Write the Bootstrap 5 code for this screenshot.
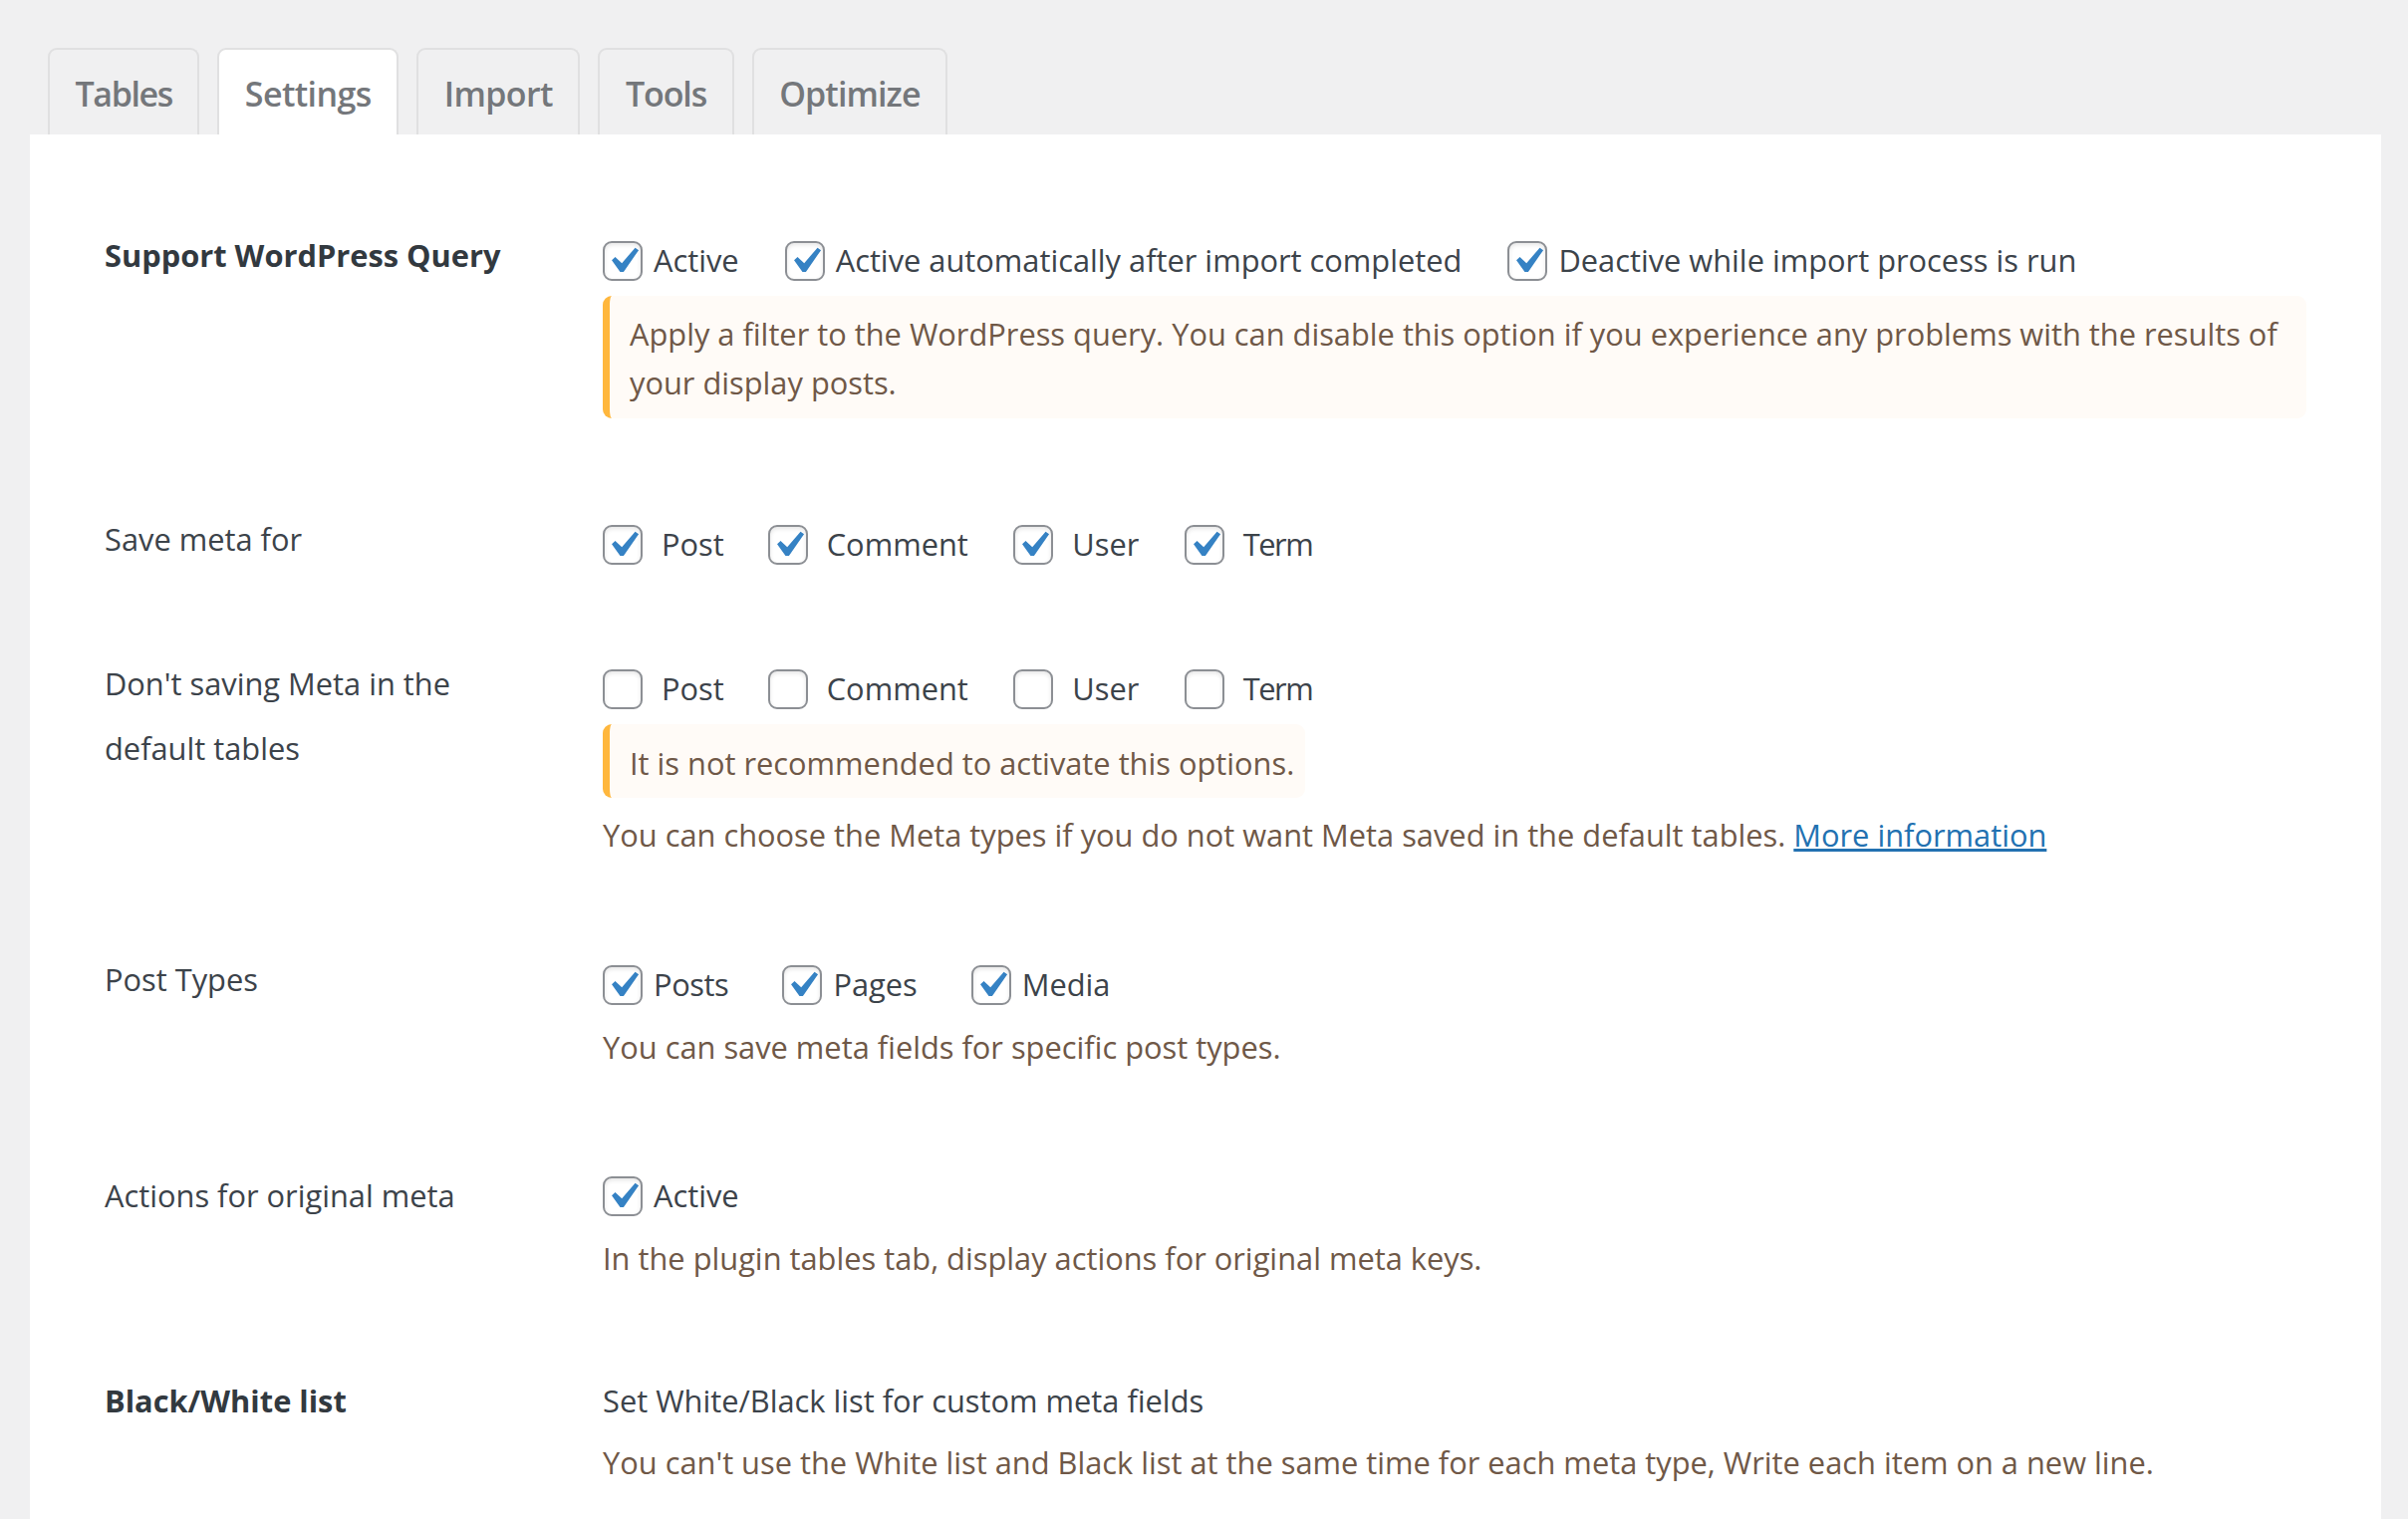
<!DOCTYPE html>
<html lang="en"><head><meta charset="utf-8"><title>Settings</title>
<link href="https://cdn.jsdelivr.net/npm/bootstrap@5.3.0/dist/css/bootstrap.min.css" rel="stylesheet">
<style>
html,body{height:100%;overflow:hidden}
body{background:#f0f0f1;font-family:"Open Sans","Noto Sans","Liberation Sans",sans-serif;font-size:30.8px;line-height:49px;color:#3c434a}
.shell{padding:48px 27px 0 30px}
.tabbar{border-bottom:0;padding-left:18px;gap:18px;height:87px;flex-wrap:nowrap}
.tabbar .nav-link{height:87px;margin:0;padding:4px 25.5px 0;border:2px solid #e0e0e1;border-bottom:0;border-radius:9px 9px 0 0;background:#f0f0f1;color:#74777b;font-size:34px;font-weight:600;line-height:80px;letter-spacing:-.6px}
.tabbar .nav-link.active{background:#fff;color:#74777b;border-color:#e0e0e1}
.tabbar .nav-link.kern{letter-spacing:-1.4px}
.tabbar .nav-link.kern-b{letter-spacing:-1.1px}
.tabbar .nav-link.kern-c{letter-spacing:-.9px}
.panel-body{background:#fff;height:1500px;padding:97px 75px 0}
.setrow{display:flex}
.setlabel{width:500px;flex:none}
.setlabel.strong{font-weight:700;color:#32393f}
.setlabel.tall{line-height:65px}
.setfield{flex:1;min-width:0;padding-top:10px}
.optline{display:flex;align-items:center;height:40px}
.optline label{display:flex;align-items:center}
.optline label+label{margin-left:46px}
.optline span{padding-left:11px;margin-top:-2px}
.optline.wide label+label{margin-left:44px}
.optline.wide label:nth-child(n+3){margin-left:45.5px}
.optline.wide span{padding-left:19px}
.optline.spaced label+label{margin-left:54px}
.optline.spaced label:first-child span{letter-spacing:-.4px}
.optline .tight{letter-spacing:-1.5px}
.wpcheck.form-check-input{width:40px;height:40px;margin:0;flex:none;border:2px solid #8c8f94;border-radius:9px;background-color:#fff;box-shadow:inset 0 2px 4px rgba(0,0,0,.1);float:none}
.wpcheck.form-check-input:checked{background-color:#fff;border-color:#8c8f94;background-size:52px 52px;background-position:center;background-repeat:no-repeat;background-image:url("data:image/svg+xml,%3Csvg xmlns='http://www.w3.org/2000/svg' viewBox='0 0 20 20'%3E%3Cpath d='M14.83 4.89l1.34.94-5.81 8.38H9.02L5.78 9.67l1.34-1.25 2.57 2.4z' fill='%233582c4'/%3E%3C/svg%3E")}
.warnbox{background:#fffbf7;border-left:7px solid #ffb73d;border-radius:9px;color:#6f5847;padding:14px 11px 11px 20px;margin-top:15px}
.warnbox.fit{width:fit-content;padding-top:15px;padding-bottom:10px}
.hint{color:#6f5847;margin:18px 0 0}
.hint.close{margin-top:13px}
.hint a{color:#2271b1}
.r2{margin-top:97px}
.r3{margin-top:87px}
.r3 .setfield{padding-top:18px}
.r4{margin-top:96px}
.r5{margin-top:100px}
.r5 .setfield{padding-top:5px}
.r6{margin-top:94px}
.r6 .setfield{padding-top:0}
</style></head><body>
<div class="shell">
<ul class="nav nav-tabs tabbar">
<li class="nav-item"><a class="nav-link kern" href="#">Tables</a></li>
<li class="nav-item"><a class="nav-link active" href="#">Settings</a></li>
<li class="nav-item"><a class="nav-link" href="#">Import</a></li>
<li class="nav-item"><a class="nav-link kern-b" href="#">Tools</a></li>
<li class="nav-item"><a class="nav-link kern-c" href="#">Optimize</a></li>
</ul>
<div class="panel-body">
<div class="setrow r1">
 <div class="setlabel strong">Support WordPress Query</div>
 <div class="setfield">
  <div class="optline"><label><input class="form-check-input wpcheck" type="checkbox" checked><span>Active</span></label><label><input class="form-check-input wpcheck" type="checkbox" checked><span>Active automatically after import completed</span></label><label><input class="form-check-input wpcheck" type="checkbox" checked><span>Deactive while import process is run</span></label></div>
  <div class="warnbox">Apply a filter to the WordPress query. You can disable this option if you experience any problems with the results of your display posts.</div>
 </div>
</div>
<div class="setrow r2">
 <div class="setlabel">Save meta for</div>
 <div class="setfield">
  <div class="optline wide"><label><input class="form-check-input wpcheck" type="checkbox" checked><span>Post</span></label><label><input class="form-check-input wpcheck" type="checkbox" checked><span>Comment</span></label><label><input class="form-check-input wpcheck" type="checkbox" checked><span>User</span></label><label><input class="form-check-input wpcheck" type="checkbox" checked><span class="tight">Term</span></label></div>
 </div>
</div>
<div class="setrow r3">
 <div class="setlabel tall">Don't saving Meta in the<br>default tables</div>
 <div class="setfield">
  <div class="optline wide"><label><input class="form-check-input wpcheck" type="checkbox"><span>Post</span></label><label><input class="form-check-input wpcheck" type="checkbox"><span>Comment</span></label><label><input class="form-check-input wpcheck" type="checkbox"><span>User</span></label><label><input class="form-check-input wpcheck" type="checkbox"><span class="tight">Term</span></label></div>
  <div class="warnbox fit">It is not recommended to activate this options.</div>
  <p class="hint close">You can choose the Meta types if you do not want Meta saved in the default tables. <a href="#">More information</a></p>
 </div>
</div>
<div class="setrow r4">
 <div class="setlabel">Post Types</div>
 <div class="setfield">
  <div class="optline spaced"><label><input class="form-check-input wpcheck" type="checkbox" checked><span>Posts</span></label><label><input class="form-check-input wpcheck" type="checkbox" checked><span>Pages</span></label><label><input class="form-check-input wpcheck" type="checkbox" checked><span>Media</span></label></div>
  <p class="hint">You can save meta fields for specific post types.</p>
 </div>
</div>
<div class="setrow r5">
 <div class="setlabel">Actions for original meta</div>
 <div class="setfield">
  <div class="optline"><label><input class="form-check-input wpcheck" type="checkbox" checked><span>Active</span></label></div>
  <p class="hint">In the plugin tables tab, display actions for original meta keys.</p>
 </div>
</div>
<div class="setrow r6">
 <div class="setlabel strong">Black/White list</div>
 <div class="setfield">
  <div>Set White/Black list for custom meta fields</div>
  <p class="hint close">You can't use the White list and Black list at the same time for each meta type, Write each item on a new line.</p>
 </div>
</div>
</div>
</div>
<script src="https://cdn.jsdelivr.net/npm/bootstrap@5.3.0/dist/js/bootstrap.bundle.min.js"></script>
</body></html>
